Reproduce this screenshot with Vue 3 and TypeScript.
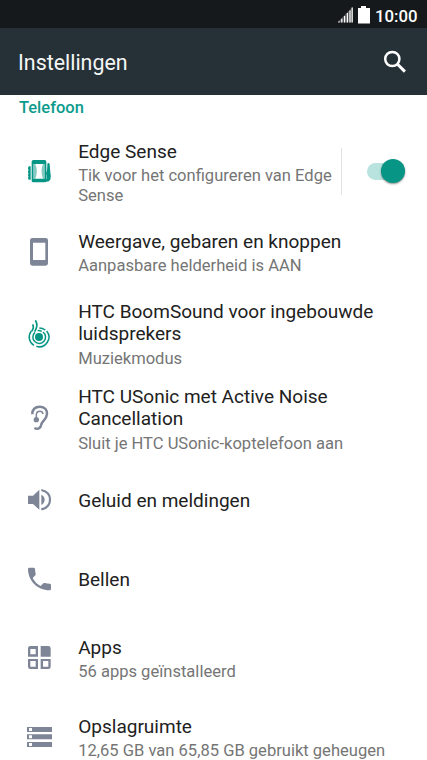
<script setup lang="ts">
interface Setting {
  icon: string
  viewBox: string
  height: number
  title: string[]
  detail: string[]
  teal?: boolean
  toggle?: boolean
}

const settings: Setting[] = [
  { icon: 'edge', viewBox: '0 6 180 180', height: 82, title: ['Edge Sense'], detail: ['Tik voor het configureren van Edge', 'Sense'], teal: true, toggle: true },
  { icon: 'display', viewBox: '0 -9 180 180', height: 78, title: ['Weergave, gebaren en knoppen'], detail: ['Aanpasbare helderheid is AAN'] },
  { icon: 'boom', viewBox: '0 -3 180 180', height: 85, title: ['HTC BoomSound voor ingebouwde', 'luidsprekers'], detail: ['Muziekmodus'], teal: true },
  { icon: 'ear', viewBox: '0 -3 180 180', height: 85, title: ['HTC USonic met Active Noise', 'Cancellation'], detail: ['Sluit je HTC USonic-koptelefoon aan'] },
  { icon: 'sound', viewBox: '0 3 180 180', height: 79, title: ['Geluid en meldingen'], detail: [] },
  { icon: 'call', viewBox: '0 0 180 180', height: 79, title: ['Bellen'], detail: [] },
  { icon: 'apps', viewBox: '0 -3 180 180', height: 79, title: ['Apps'], detail: ['56 apps geïnstalleerd'] },
  { icon: 'storage', viewBox: '0 3 180 180', height: 79, title: ['Opslagruimte'], detail: ['12,65 GB van 65,85 GB gebruikt geheugen'] },
]
</script>

<template>
  <div class="screen">
    <div class="status">
      <svg class="signal" viewBox="0 0 15 16">
        <path d="M0 15.5V14.8L14.5 0V15.5Z" fill="#fff" fill-opacity=".28" />
        <path d="M1 15.5v-1.2M3.8 15.5v-3.7M6.6 15.5V9M9.4 15.5V6M12 15.5V3.5M14.2 15.5V.6" stroke="#fff" stroke-width="1.2" />
      </svg>
      <svg class="battery" viewBox="0 0 12 18">
        <path d="M3 0h5v2h4v15.5H0V2h3z" fill="#fff" />
      </svg>
      <span class="clock">10:00</span>
    </div>
    <header class="bar">
      <h1>Instellingen</h1>
      <svg class="search" viewBox="0 0 24 24">
        <circle cx="9.3" cy="9" r="7.1" fill="none" stroke="#fff" stroke-width="2.5" />
        <path d="M14.3 14l7.6 7.6" stroke="#fff" stroke-width="3" />
      </svg>
    </header>
    <main>
      <h2>Telefoon</h2>
      <div
        v-for="s in settings"
        :key="s.icon"
        class="row"
        :style="{ height: s.height + 'px' }"
      >
        <svg class="icon" :class="{ teal: s.teal }" :viewBox="s.viewBox">
          <g v-if="s.icon === 'edge'">
            <path fill="currentColor" fill-rule="evenodd" d="M70 60h34q5 0 5 5v57q0 5-5 5H70q-5 0-5-5V65q0-5 5-5zM70 72v44h34V72z" />
            <path d="M70 72h6q9 22 0 44h-6zM104 72h-5q-9 22 0 44h5z" fill="currentColor" fill-opacity=".5" />
            <path d="M57 79h5v40h-5q-3-2-3-5 0-3 2-4-2-2-2-5t2-5q-2-2-2-5t2-5q-2-2-2-5 0-4 3-6zM112 71q4-5 7 1l2 25q3 13 0 22-4 7-14 6 1-7 3-11 0-9-2-14 4-7 4-23z" fill="currentColor" />
          </g>
          <path v-else-if="s.icon === 'display'" fill="currentColor" fill-rule="evenodd" d="M67 39h40q7 0 7 7v69q0 7-7 7H67q-7 0-7-7V46q0-7 7-7zM69 53v52h37V53z" />
          <g v-else-if="s.icon === 'boom'" fill="none" stroke="currentColor">
            <circle cx="87" cy="96" r="12" fill="currentColor" stroke="none" />
            <path d="M75 82A19 19 0 1 0 99 81M83 77a19 19 0 0 1 12 2" stroke-width="4.5" />
            <path d="M64 78a29 29 0 0 0 8 43M79 124a29 29 0 0 0 31-46M88 69q10 0 18 6" stroke-width="4.5" />
            <path d="M76 46q10 15-2 34M68 58q5 10-3 21" stroke-width="5" />
          </g>
          <g v-else-if="s.icon === 'ear'" fill="none" stroke="currentColor">
            <path d="M67 73C67 57 77 50 90 50C105 50 112 61 111 72C110 89 96 92 94 103C92 116 83 119 73 114" stroke-width="7.5" />
            <path d="M79 87V75C79 66 85 64 90 64C95 64 98 67 99 72" stroke-width="4.5" />
            <circle cx="79" cy="89" r="8" fill="currentColor" stroke="none" />
          </g>
          <g v-else-if="s.icon === 'sound'" fill="currentColor">
            <path d="M54 77h15l19-18v60L69 102H54zM94 74q10 5 10 15t-10 16z" />
            <path d="M94 60q26 6 26 29t-26 29" fill="none" stroke="currentColor" stroke-width="6.5" />
          </g>
          <path v-else-if="s.icon === 'call'" fill="currentColor" d="M58 53h13q4 0 4 4 0 8 2 14 1 3-1 5l-8 8q8 16 24 24l8-8q2-2 5-1 6 2 14 2 4 0 4 4v12q0 4-4 4C80 121 54 90 54 57q0-4 4-4z" />
          <g v-else-if="s.icon === 'apps'">
            <path d="M61 48h23v32H54V55q0-7 7-7zm0 9v16h16V57zM92 48h23q7 0 7 7v25H92zM54 87h30v30H61q-7 0-7-7zm7 6v17h16V93zM92 87h30v23q0 7-7 7H92zm7 6v17h16V93z" fill="currentColor" fill-rule="evenodd" />
          </g>
          <g v-else fill="currentColor">
            <path d="M51 60h75v15H51zM51 82h75v15H51zM51 105h75v15H51z" />
            <path d="M57 63h9v9h-9zM57 85h9v9h-9zM57 108h9v9h-9z" fill="#fff" />
          </g>
        </svg>
        <div class="copy">
          <div class="title"><div v-for="line in s.title" :key="line">{{ line }}</div></div>
          <div v-if="s.detail.length" class="detail"><div v-for="line in s.detail" :key="line">{{ line }}</div></div>
        </div>
        <div v-if="s.toggle" class="switch-area">
          <div class="track"><div class="thumb"></div></div>
        </div>
      </div>
    </main>
  </div>
</template>

<style>
body { background: #fff; overflow: hidden; }
</style>

<style scoped>
.screen {
  width: 427px;
  height: 760px;
  overflow: hidden;
  background: #fff;
  font-family: Roboto, "Liberation Sans", sans-serif;
}
.status {
  display: flex;
  height: 28px;
  box-sizing: border-box;
  padding: 6px 9px 0 338px;
  background: #15191c;
}
.signal { width: 15px; height: 16px; margin-top: 1px; flex: none; }
.battery { width: 12px; height: 18px; margin-left: 5px; flex: none; }
.clock {
  margin-left: 5px;
  color: #fff;
  font-size: 16.8px;
  font-weight: 500;
  line-height: 20px;
  white-space: nowrap;
}
.bar {
  display: flex;
  align-items: center;
  justify-content: space-between;
  height: 67px;
  box-sizing: border-box;
  padding: 0 20px 0 18px;
  background: #263137;
}
h1 {
  margin: 2px 0 0;
  color: #f5f6f6;
  font-size: 21.4px;
  font-weight: 400;
  line-height: 28px;
}
.search { width: 24px; height: 24px; }
h2 {
  height: 36px;
  margin: 0;
  padding: 3px 0 0 19px;
  box-sizing: border-box;
  color: #0b9b8c;
  font-size: 16.5px;
  font-weight: 500;
  line-height: 20px;
}
.row { display: flex; align-items: center; }
.icon {
  width: 60px;
  height: 60px;
  margin-left: 10px;
  flex: none;
  color: #7e8596;
}
.icon.teal { color: #079686; }
.copy { margin-left: 8.2px; padding-top: 2px; flex: 1; white-space: nowrap; }
.title { color: #212121; font-size: 19.02px; line-height: 22.3px; }
.detail { margin-top: 3px; color: #757575; font-size: 16.56px; line-height: 19.5px; }
.switch-area {
  display: flex;
  align-items: center;
  width: 86px;
  height: 47px;
  box-sizing: border-box;
  margin-bottom: 2px;
  padding-left: 25px;
  border-left: 1px solid #e1e1e1;
  flex: none;
}
.track {
  display: flex;
  align-items: center;
  justify-content: flex-end;
  width: 38px;
  height: 17px;
  border-radius: 9px;
  background: #b9e3df;
}
.thumb {
  width: 24px;
  height: 24px;
  flex: none;
  border-radius: 50%;
  background: #079686;
  box-shadow: 0 1px 2px rgba(0, 0, 0, .45);
}
</style>
